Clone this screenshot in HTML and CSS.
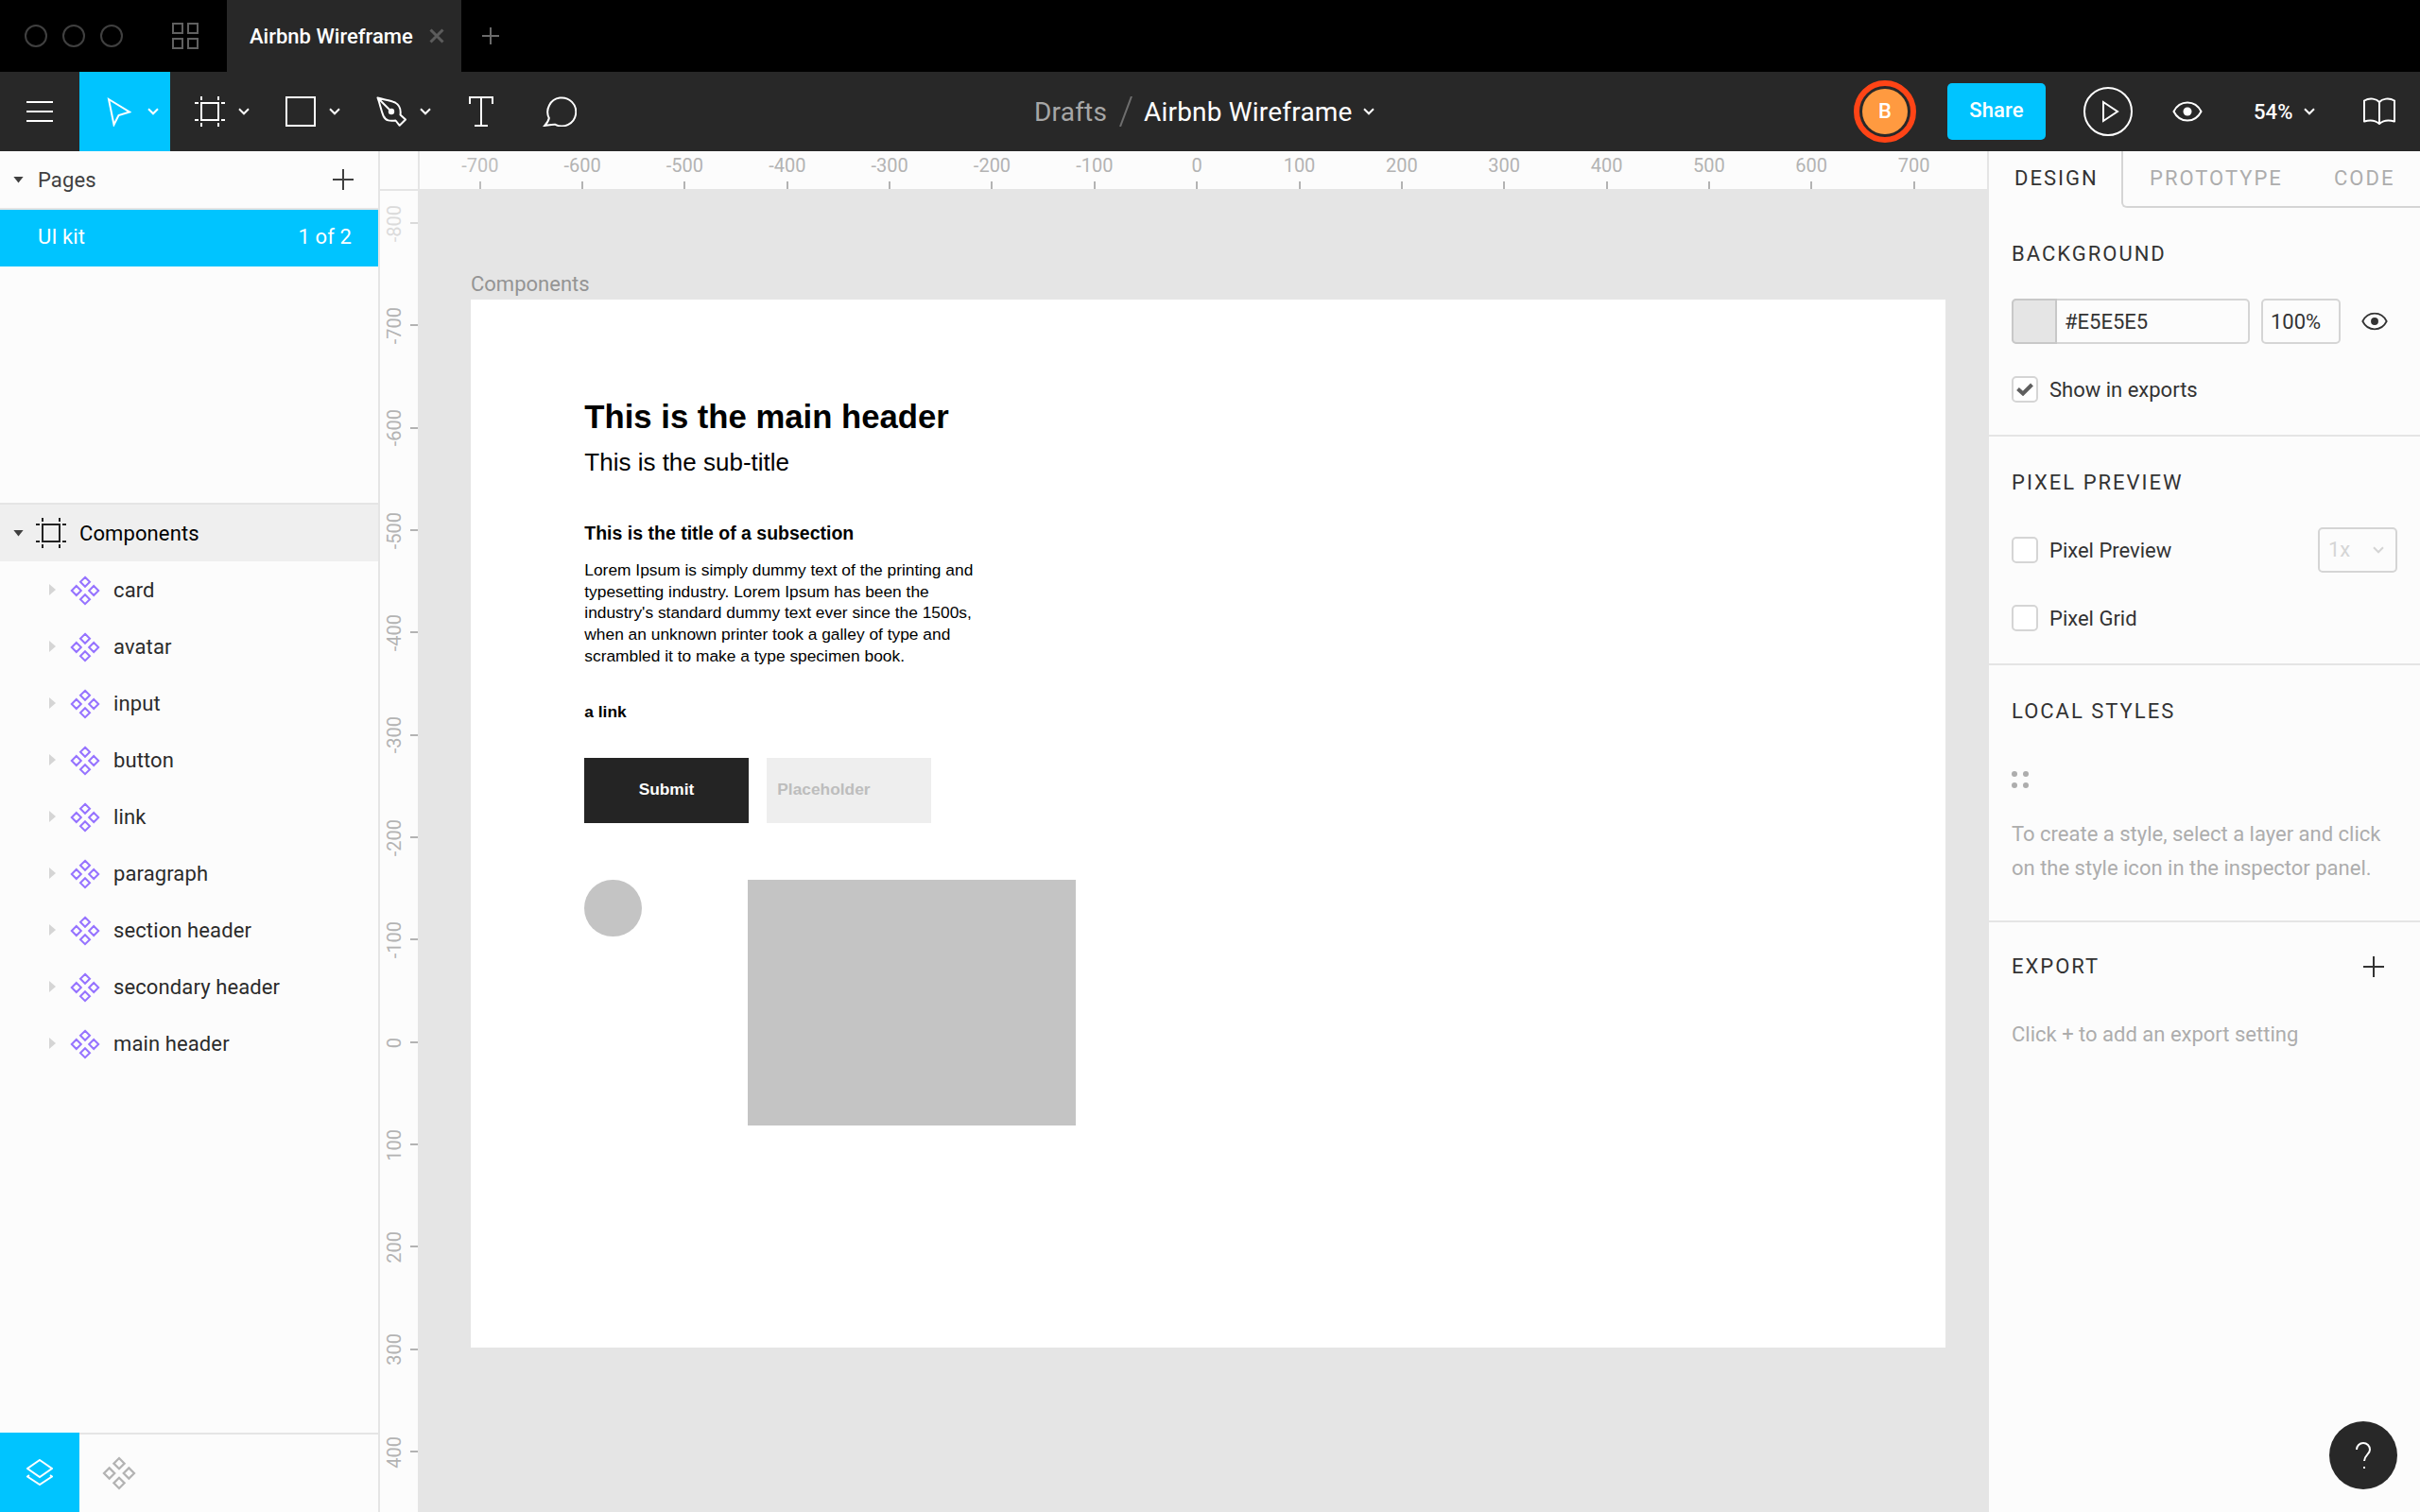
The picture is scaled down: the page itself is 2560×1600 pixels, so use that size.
FILE: index.html
```html
<!DOCTYPE html>
<html lang="en">
<head>
<meta charset="utf-8">
<title>Airbnb Wireframe</title>
<link rel="stylesheet" href="styles.css">
</head>
<body>
<svg class="defs" width="0" height="0" aria-hidden="true">
  <symbol id="component" viewBox="0 0 32 32"><path d="M16 1.800l5 5-5 5-5-5zM16 20.200l5 5-5 5-5-5zM6.800 11l5 5-5 5-5-5zM25.200 11l5 5-5 5-5-5z" fill="none" stroke="currentColor" stroke-width="2"/></symbol>
  <symbol id="frame" viewBox="0 0 32 32"><path d="M7 7h18v18H7zM7 0v4M25 0v4M7 28v4M25 28v4M0 7h4M28 7h4M0 25h4M28 25h4" fill="none" stroke="currentColor" stroke-width="2"/></symbol>
  <symbol id="chevron" viewBox="0 0 12 8"><path d="M1 1.300l5 5 5-5" fill="none" stroke="currentColor" stroke-width="2"/></symbol>
  <symbol id="plus" viewBox="0 0 22 22"><path d="M11 0v22M0 11h22" fill="none" stroke="currentColor" stroke-width="2"/></symbol>
  <symbol id="eye" viewBox="0 0 32 22"><path d="M1.500 11C4.500 5 9.500 1.500 16 1.500S27.500 5 30.500 11C27.500 17 22.500 20.500 16 20.500S4.500 17 1.500 11z" fill="none" stroke="currentColor" stroke-width="2"/><circle cx="16" cy="11" r="4.500" fill="currentColor"/></symbol>
</svg>

<header class="titlebar">
  <div class="lights"><i></i><i></i><i></i></div>
  <svg class="grid-icon" width="28" height="28" viewBox="0 0 28 28"><path d="M1 1h10v10H1zM17 1h10v10H17zM1 17h10v10H1zM17 17h10v10H17z" fill="none" stroke="#606060" stroke-width="2"/></svg>
  <div class="tab"><span>Airbnb Wireframe</span><svg width="16" height="16" viewBox="0 0 16 16"><path d="M1.500 1.500l13 13M14.500 1.500l-13 13" stroke="#5c5c5c" stroke-width="3"/></svg></div>
  <svg class="new-tab" width="18" height="18" viewBox="0 0 18 18"><path d="M9 0v18M0 9h18" fill="none" stroke="currentColor" stroke-width="2"/></svg>
</header>

<nav class="toolbar">
  <div class="tools">
    <div class="tool menu"><svg width="28" height="22" viewBox="0 0 28 22"><path d="M0 1h28M0 11h28M0 21h28" stroke="#fff" stroke-width="2"/></svg></div>
    <div class="tool active"><svg class="i-move" width="26" height="32" viewBox="0 0 26 32"><path d="M2 3l22 13.500-11.500 3.500L7.500 30z" fill="none" stroke="#fff" stroke-width="2"/></svg><svg class="chev" width="12" height="8"><use href="#chevron"/></svg></div>
    <div class="tool drop"><svg width="32" height="32"><use href="#frame"/></svg><svg class="chev" width="12" height="8"><use href="#chevron"/></svg></div>
    <div class="tool drop"><svg width="32" height="32" viewBox="0 0 32 32"><path d="M1 1h30v30H1z" fill="none" stroke="#fff" stroke-width="2"/></svg><svg class="chev" width="12" height="8"><use href="#chevron"/></svg></div>
    <div class="tool drop"><svg width="32" height="32" viewBox="0 0 32 32"><path d="M1.500 1.500C8 3.500 15 4 20 6.500c5 2.800 6.300 7 5.500 13l5.500 5-6.300 6.300-4.200-5.300c-6 .8-10.500.5-13-5C5 14.500 4 8 1.500 1.500zL16 16" fill="none" stroke="#fff" stroke-width="2" stroke-linejoin="round"/><circle cx="16" cy="16" r="3.200" fill="#fff"/></svg><svg class="chev" width="12" height="8"><use href="#chevron"/></svg></div>
    <div class="tool text-tool"><svg width="26" height="32" viewBox="0 0 26 32"><path d="M1 8V1h24v7M13 1v30M6 31h14" fill="none" stroke="#fff" stroke-width="2"/></svg></div>
    <div class="tool"><svg width="36" height="32" viewBox="0 0 36 32"><path d="M6.800 23A15 15 0 1 1 13.500 29.800C10 29.500 6 30.500 2.200 31c2.300-2.500 4.100-5 4.600-8z" fill="none" stroke="#fff" stroke-width="2"/></svg></div>
  </div>
  <div class="filename"><span class="folder">Drafts</span><svg width="14" height="32" viewBox="0 0 14 32"><path d="M1 32L13 0" stroke="#6e6e6e" stroke-width="2"/></svg><span class="name">Airbnb Wireframe</span><svg class="chev" width="12" height="8"><use href="#chevron"/></svg></div>
  <div class="actions">
    <div class="avatar"><span>B</span></div>
    <div class="share">Share</div>
    <svg class="play" width="52" height="52" viewBox="0 0 52 52"><circle cx="26" cy="26" r="25" fill="none" stroke="#fff" stroke-width="2"/><path d="M21 16v20L36 26z" fill="none" stroke="#fff" stroke-width="2"/></svg>
    <svg class="view" width="32" height="22"><use href="#eye"/></svg>
    <span class="zoom">54%</span><svg class="chev" width="12" height="8"><use href="#chevron"/></svg>
    <svg class="book" width="36" height="30" viewBox="0 0 36 30"><path d="M18 5C15 1.500 8 0 2 3.500v22c5-1.500 11-2 16 2.500 5-4.500 11-4 16-2.500v-22C28 0 21 1.500 18 5zv22" fill="none" stroke="#fff" stroke-width="2" stroke-linejoin="round"/></svg>
  </div>
</nav>

<main class="workspace">
  <aside class="sidebar">
    <div class="pages-head"><i class="tri-down"></i><span>Pages</span><svg width="22" height="22"><use href="#plus"/></svg></div>
    <div class="page-row"><span>UI kit</span><span>1 of 2</span></div>
    <div class="layers">
      <div class="layer root"><i class="tri-down"></i><svg width="32" height="32"><use href="#frame"/></svg><span>Components</span></div>
      <div class="layer"><i class="tri-right"></i><svg width="32" height="32"><use href="#component"/></svg><span>card</span></div>
      <div class="layer"><i class="tri-right"></i><svg width="32" height="32"><use href="#component"/></svg><span>avatar</span></div>
      <div class="layer"><i class="tri-right"></i><svg width="32" height="32"><use href="#component"/></svg><span>input</span></div>
      <div class="layer"><i class="tri-right"></i><svg width="32" height="32"><use href="#component"/></svg><span>button</span></div>
      <div class="layer"><i class="tri-right"></i><svg width="32" height="32"><use href="#component"/></svg><span>link</span></div>
      <div class="layer"><i class="tri-right"></i><svg width="32" height="32"><use href="#component"/></svg><span>paragraph</span></div>
      <div class="layer"><i class="tri-right"></i><svg width="32" height="32"><use href="#component"/></svg><span>section header</span></div>
      <div class="layer"><i class="tri-right"></i><svg width="32" height="32"><use href="#component"/></svg><span>secondary header</span></div>
      <div class="layer"><i class="tri-right"></i><svg width="32" height="32"><use href="#component"/></svg><span>main header</span></div>
    </div>
    <div class="side-foot">
      <div class="foot-layers"><svg width="28" height="28" viewBox="0 0 28 28"><path d="M14 1l13 9-13 9L1 10zM3 17.200L1 18.500 14 27l13-8.500-2-1.300" fill="none" stroke="#fff" stroke-width="2"/></svg></div>
      <div class="foot-components"><svg width="36" height="36"><use href="#component"/></svg></div>
    </div>
  </aside>

  <section class="stage">
    <div class="corner"></div>
    <div class="ruler-x">
      <span class="faded">-700</span><span>-600</span><span>-500</span><span>-400</span><span>-300</span><span>-200</span><span>-100</span><span>0</span><span>100</span><span>200</span><span>300</span><span>400</span><span>500</span><span>600</span><span>700</span>
    </div>
    <div class="ruler-y">
      <div class="faint"><span>-800</span></div><div><span>-700</span></div><div><span>-600</span></div><div><span>-500</span></div><div><span>-400</span></div><div><span>-300</span></div><div><span>-200</span></div><div><span>-100</span></div><div><span>0</span></div><div><span>100</span></div><div><span>200</span></div><div><span>300</span></div><div><span>400</span></div>
    </div>
    <div class="canvas">
      <div class="frame-label">Components</div>
      <div class="artboard">
        <div class="item main-header">This is the main header</div>
        <div class="item sub-title">This is the sub-title</div>
        <div class="item section-title">This is the title of a subsection</div>
        <div class="item paragraph">Lorem Ipsum is simply dummy text of the printing and<br>typesetting industry. Lorem Ipsum has been the<br>industry's standard dummy text ever since the 1500s,<br>when an unknown printer took a galley of type and<br>scrambled it to make a type specimen book.</div>
        <div class="item link">a link</div>
        <div class="item button">Submit</div>
        <div class="item input">Placeholder</div>
        <div class="item circle"></div>
        <div class="item card"></div>
      </div>
    </div>
  </section>

  <aside class="inspector">
    <div class="tabs"><span class="on">DESIGN</span><div class="off"><span>PROTOTYPE</span><span>CODE</span></div></div>
    <section class="background">
      <h2>BACKGROUND</h2>
      <div class="row fill-row"><div class="color"><i></i><span>#E5E5E5</span></div><div class="opacity">100%</div><svg width="28" height="20" viewBox="0 0 32 22"><use href="#eye"/></svg></div>
      <div class="row"><i class="check"><svg width="18" height="14" viewBox="0 0 18 14"><path d="M1.500 6.500L7 11.500 16.500 2" fill="none" stroke="#5f5f5f" stroke-width="4"/></svg></i><span>Show in exports</span></div>
    </section>
    <section class="pixel">
      <h2>PIXEL PREVIEW</h2>
      <div class="row"><i class="check"></i><span>Pixel Preview</span><div class="select"><span>1x</span><svg width="12" height="8"><use href="#chevron"/></svg></div></div>
      <div class="row"><i class="check"></i><span>Pixel Grid</span></div>
    </section>
    <section class="styles">
      <h2>LOCAL STYLES</h2>
      <div class="dots"><i></i><i></i><i></i><i></i></div>
      <p>To create a style, select a layer and click<br>on the style icon in the inspector panel.</p>
    </section>
    <section class="export">
      <div class="export-head"><h2>EXPORT</h2><svg width="22" height="22"><use href="#plus"/></svg></div>
      <p>Click + to add an export setting</p>
    </section>
  </aside>
</main>
<div class="help"><svg width="16" height="28" viewBox="0 0 16 28"><path d="M1 8a7 7 0 1 1 14 0c0 5-6 6-6 12M9 26v2" fill="none" stroke="#fff" stroke-width="2"/></svg></div>
</body>
</html>
```
FILE: styles.css
```css
* { box-sizing: border-box; }
body { margin: 0; width: 2560px; height: 1600px; overflow: hidden; display: flex; flex-direction: column; background: #fcfcfc; color: #333; font: 22px/30px Roboto, "Liberation Sans", sans-serif; letter-spacing: .11px; white-space: nowrap; }
svg { display: block; flex: none; }
i { display: block; flex: none; }
h2, p { margin: 0; font-size: 22px; font-weight: 400; }
.defs { position: absolute; }

/* window title bar */
.titlebar { height: 76px; flex: none; background: #000; display: flex; align-items: center; }
.lights { display: flex; gap: 16px; padding-left: 26px; width: 182px; }
.lights i { width: 24px; height: 24px; border: 2px solid #404040; border-radius: 50%; }
.grid-icon { margin-right: 30px; }
.tab { width: 248px; height: 76px; background: #282828; color: #fff; display: flex; align-items: center; padding-left: 24px; font-weight: 500; }
.tab span { width: 190px; letter-spacing: 0; padding-top: 1px; }
.new-tab { margin-left: 22px; color: #6a6a6a; }

/* toolbar */
.toolbar { height: 84px; flex: none; background: #282828; color: #fff; display: grid; grid-template-columns: 1094px 1fr auto; align-items: center; }
.tools { display: flex; height: 84px; }
.tool { display: flex; align-items: center; }
.menu { width: 84px; padding-left: 28px; }
.active { width: 96px; background: #00c4ff; padding-left: 29px; }
.i-move { margin-right: 17px; }
.drop { width: 96px; padding-left: 26px; gap: 14px; }
.text-tool { width: 106px; padding-left: 28px; }
.filename { display: flex; align-items: center; font-size: 28px; letter-spacing: .2px; }
.filename span { padding-top: 1px; }
.folder { color: #a6a6a6; width: 90px; }
.name { margin-left: 12px; width: 232px; }
.actions { display: flex; align-items: center; padding-right: 25px; }
.avatar { width: 66px; height: 66px; border: 6px solid #ff4416; border-radius: 50%; padding: 3px; margin-right: 33px; }
.avatar span { display: flex; align-items: center; justify-content: center; height: 48px; border-radius: 50%; background: #ff9a40; font-weight: 500; }
.share { width: 104px; height: 60px; border-radius: 5px; background: #00c4ff; text-align: center; line-height: 57px; font-weight: 500; margin-right: 40px; }
.view { margin: 0 54px 0 42px; }
.zoom { width: 53px; font-weight: 500; padding-top: 1px; }
.book { margin-left: 50px; }

/* columns */
.workspace { flex: 1; min-height: 0; display: grid; grid-template-columns: 402px 1700px 458px; }
.sidebar { border-right: 2px solid #e5e5e5; display: flex; flex-direction: column; }
.pages-head { height: 62px; border-bottom: 2px solid #e5e5e5; display: flex; align-items: center; padding: 0 26px 0 14px; color: #404040; }
.pages-head span { margin-left: 15px; flex: 1; padding-top: 1px; }
.tri-down { width: 11px; height: 7px; background: #404040; clip-path: polygon(0 0, 100% 0, 50% 100%); }
.tri-right { width: 7px; height: 12px; background: #d5d5d5; clip-path: polygon(0 0, 100% 50%, 0 100%); }
.page-row { height: 60px; background: #00c4ff; color: #fff; display: flex; justify-content: space-between; align-items: center; padding: 0 28px 2px 40px; }
.layers { margin-top: 250px; border-top: 2px solid #e5e5e5; flex: 1; }
.layer { height: 60px; display: flex; align-items: center; padding-left: 52px; color: #2b2b2b; }
.layer span { padding-top: 2px; }
.layer svg { margin: 2px 14px 0 15px; color: #9673ff; }
.layer.root { background: #efefef; padding-left: 14px; color: #000; }
.layer.root svg { margin: 0 14px 0 13px; color: #222; }
.side-foot { height: 84px; display: flex; border-top: 2px solid #e5e5e5; }
.foot-layers { width: 84px; height: 84px; margin-top: -2px; background: #00c4ff; display: flex; align-items: center; justify-content: center; }
.foot-components { width: 84px; display: flex; align-items: center; justify-content: center; color: #b3b3b3; }

/* rulers */
.stage { display: grid; grid-template-columns: 40px 1660px; grid-template-rows: 40px 1400px; min-width: 0; }
.corner { box-shadow: 2px 0 #e5e5e5, 0 2px #e5e5e5; z-index: 1; }
.ruler-x { display: flex; padding-left: 11.600px; overflow: hidden; color: #b3b3b3; font-size: 20px; letter-spacing: 0; }
.ruler-x span { width: 108.350px; flex: none; text-align: center; line-height: 30px; height: 40px; background: linear-gradient(#b3b3b3, #b3b3b3) 50% 100% / 2px 8px no-repeat; }
.ruler-x .faded { opacity: .85; }
.ruler-y { color: #b3b3b3; font-size: 20px; letter-spacing: 0; height: 1400px; overflow: hidden; display: flex; flex-direction: column; }
.ruler-y div { height: 108.350px; flex: none; background: linear-gradient(#b3b3b3, #b3b3b3) 100% 50% / 8px 2px no-repeat; display: flex; align-items: center; }
.ruler-y div:first-child { margin-top: -18.300px; }
.ruler-y span { writing-mode: vertical-rl; transform: rotate(180deg); width: 30px; line-height: 30px; text-align: center; padding-bottom: 1px; }
.ruler-y .faint { opacity: .45; }

/* canvas */
.canvas { background: #e5e5e5; padding: 84.500px 0 0 56px; }
.frame-label { height: 32px; line-height: 32px; color: #949494; letter-spacing: 0; }
.artboard { position: relative; width: 1560px; height: 1109.500px; background: #fff; color: #000; font-family: "Liberation Sans", Arial, sans-serif; letter-spacing: 0; }
.item { position: absolute; left: 120.300px; }
.main-header { top: 104px; font-size: 34.700px; line-height: 40px; font-weight: 700; }
.sub-title { top: 157.500px; font-size: 26px; line-height: 30px; }
.section-title { top: 235px; font-size: 19.500px; line-height: 24px; font-weight: 700; }
.paragraph { top: 275.500px; font-size: 17.360px; line-height: 22.700px; }
.link { top: 424.500px; font-size: 17.330px; line-height: 24px; font-weight: 700; }
.button, .input { top: 485px; width: 173.400px; height: 69.300px; line-height: 66px; font-size: 17.330px; font-weight: 700; }
.button { background: #242424; color: #fff; text-align: center; }
.input { left: 313.300px; background: #eee; color: #bdbdbd; padding-left: 11px; }
.circle { top: 614.300px; width: 60.700px; height: 60.700px; border-radius: 50%; background: #c4c4c4; }
.card { left: 293.400px; top: 614.300px; width: 346.700px; height: 260px; background: #c4c4c4; }

/* inspector */
.inspector { border-left: 2px solid #e5e5e5; background: #fcfcfc; letter-spacing: 0; }
.tabs { height: 60px; display: flex; letter-spacing: 2px; line-height: 57px; }
.on { width: 140px; padding-left: 27px; }
.off { flex: 1; border: 2px solid #d5d5d5; border-width: 0 0 2px 2px; border-bottom-left-radius: 6px; color: #adadad; display: flex; padding-left: 28px; }
.off span:first-child { width: 195px; }
.inspector section { padding: 34px 24px 0; border-bottom: 2px solid #e5e5e5; }
.inspector h2 { letter-spacing: 2px; height: 30px; }
.row { height: 72px; display: flex; align-items: center; }
.row > span { padding-top: 1px; }
.background { height: 242px; }
.fill-row { margin-top: 20px; }
.color { width: 252px; height: 48px; border: 2px solid #d5d5d5; border-radius: 5px; display: flex; align-items: center; }
.color i { width: 48px; height: 48px; margin: -2px 0 -2px -2px; background: #e5e5e5; border: 2px solid #c8c8c8; border-radius: 5px 0 0 5px; }
.color span { margin-left: 8px; padding-top: 1px; }
.opacity { width: 84px; height: 48px; border: 2px solid #d5d5d5; border-radius: 5px; margin: 0 22px 0 12px; padding-left: 8px; line-height: 45px; }
.check { width: 28px; height: 28px; border: 2px solid #d5d5d5; border-radius: 5px; background: #fff; margin-right: 12px; display: flex; align-items: center; justify-content: center; }
.pixel { height: 242px; }
.pixel h2 { margin-bottom: 20px; }
.select { width: 84px; height: 48px; margin-left: auto; border: 2px solid #d5d5d5; border-radius: 5px; color: #d5d5d5; display: flex; align-items: center; justify-content: space-between; padding: 0 12px 0 9px; }
.styles { height: 272px; }
.dots { display: grid; grid-template-columns: 6px 6px; gap: 6px; margin: 48px 0 31px; }
.dots i { width: 6px; height: 6px; border-radius: 50%; background: #adadad; }
.inspector p { color: #adadad; line-height: 36px; }
.inspector .export { border: 0; padding-top: 32px; }
.export-head { display: flex; justify-content: space-between; align-items: center; padding-right: 14px; }
.export p { margin-top: 39px; }

/* floating help button */
.help { position: absolute; left: 2464px; top: 1504px; width: 72px; height: 72px; border-radius: 50%; background: #282828; display: flex; align-items: center; justify-content: center; }
```
